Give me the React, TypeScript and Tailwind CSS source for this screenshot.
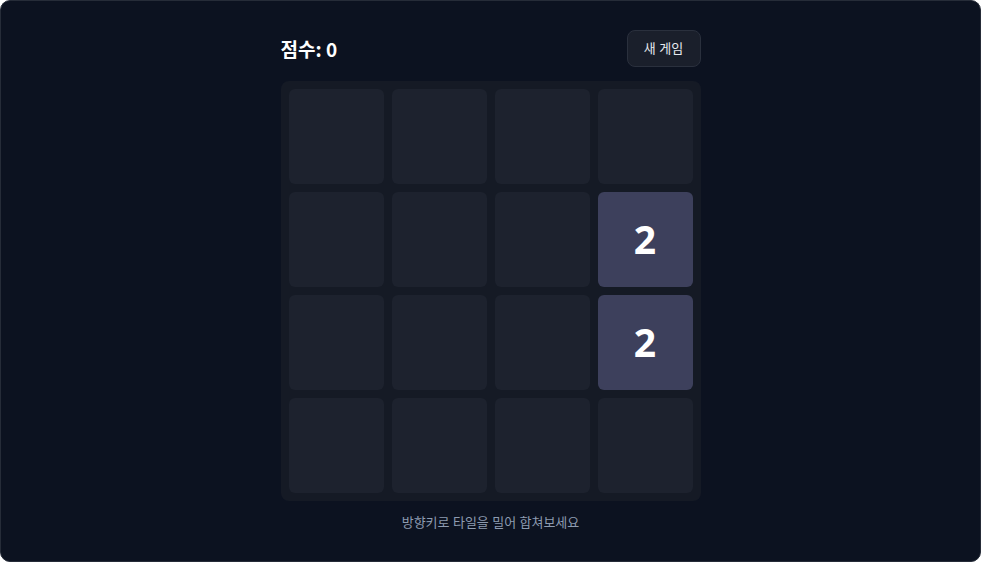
import React from "react";

const grid: number[][] = [
  [0, 0, 0, 0],
  [0, 0, 0, 2],
  [0, 0, 0, 2],
  [0, 0, 0, 0],
];

export default function App() {
  return (
    <div
      className="w-[981px] h-[562px] bg-[#0c1220] border border-[#262c38] rounded-[10px] overflow-hidden"
      style={{ fontFamily: '"Noto Sans", "Noto Sans CJK KR", sans-serif' }}
    >
      <div className="w-[420px] mx-auto pt-[29px] flex flex-col">
        <div className="flex items-center justify-between h-[37px] mb-[14px]">
          <div
            className="text-white font-bold text-[19px] leading-none"
            style={{ fontFamily: '"Noto Sans CJK KR", sans-serif' }}
          >
            점수: 0
          </div>
          <button className="w-[74px] h-[37px] rounded-lg bg-[#1a1f2b] border border-[#2a303d] text-[#e6e9ef] text-[13px]">
            새 게임
          </button>
        </div>
        <div className="bg-[#151a25] rounded-lg p-2 grid grid-cols-4 gap-2">
          {grid.flat().map((v, i) => (
            <div
              key={i}
              className={
                "h-[95px] rounded-[6px] flex items-center justify-center " +
                (v ? "bg-[#3d405c] text-white font-bold text-[39px]" : "bg-[#1d222e]")
              }
            >
              {v ? v : ""}
            </div>
          ))}
        </div>
        <div className="text-center mt-[12px] text-[13px] text-[#8d9bb0]">방향키로 타일을 밀어 합쳐보세요</div>
      </div>
    </div>
  );
}
